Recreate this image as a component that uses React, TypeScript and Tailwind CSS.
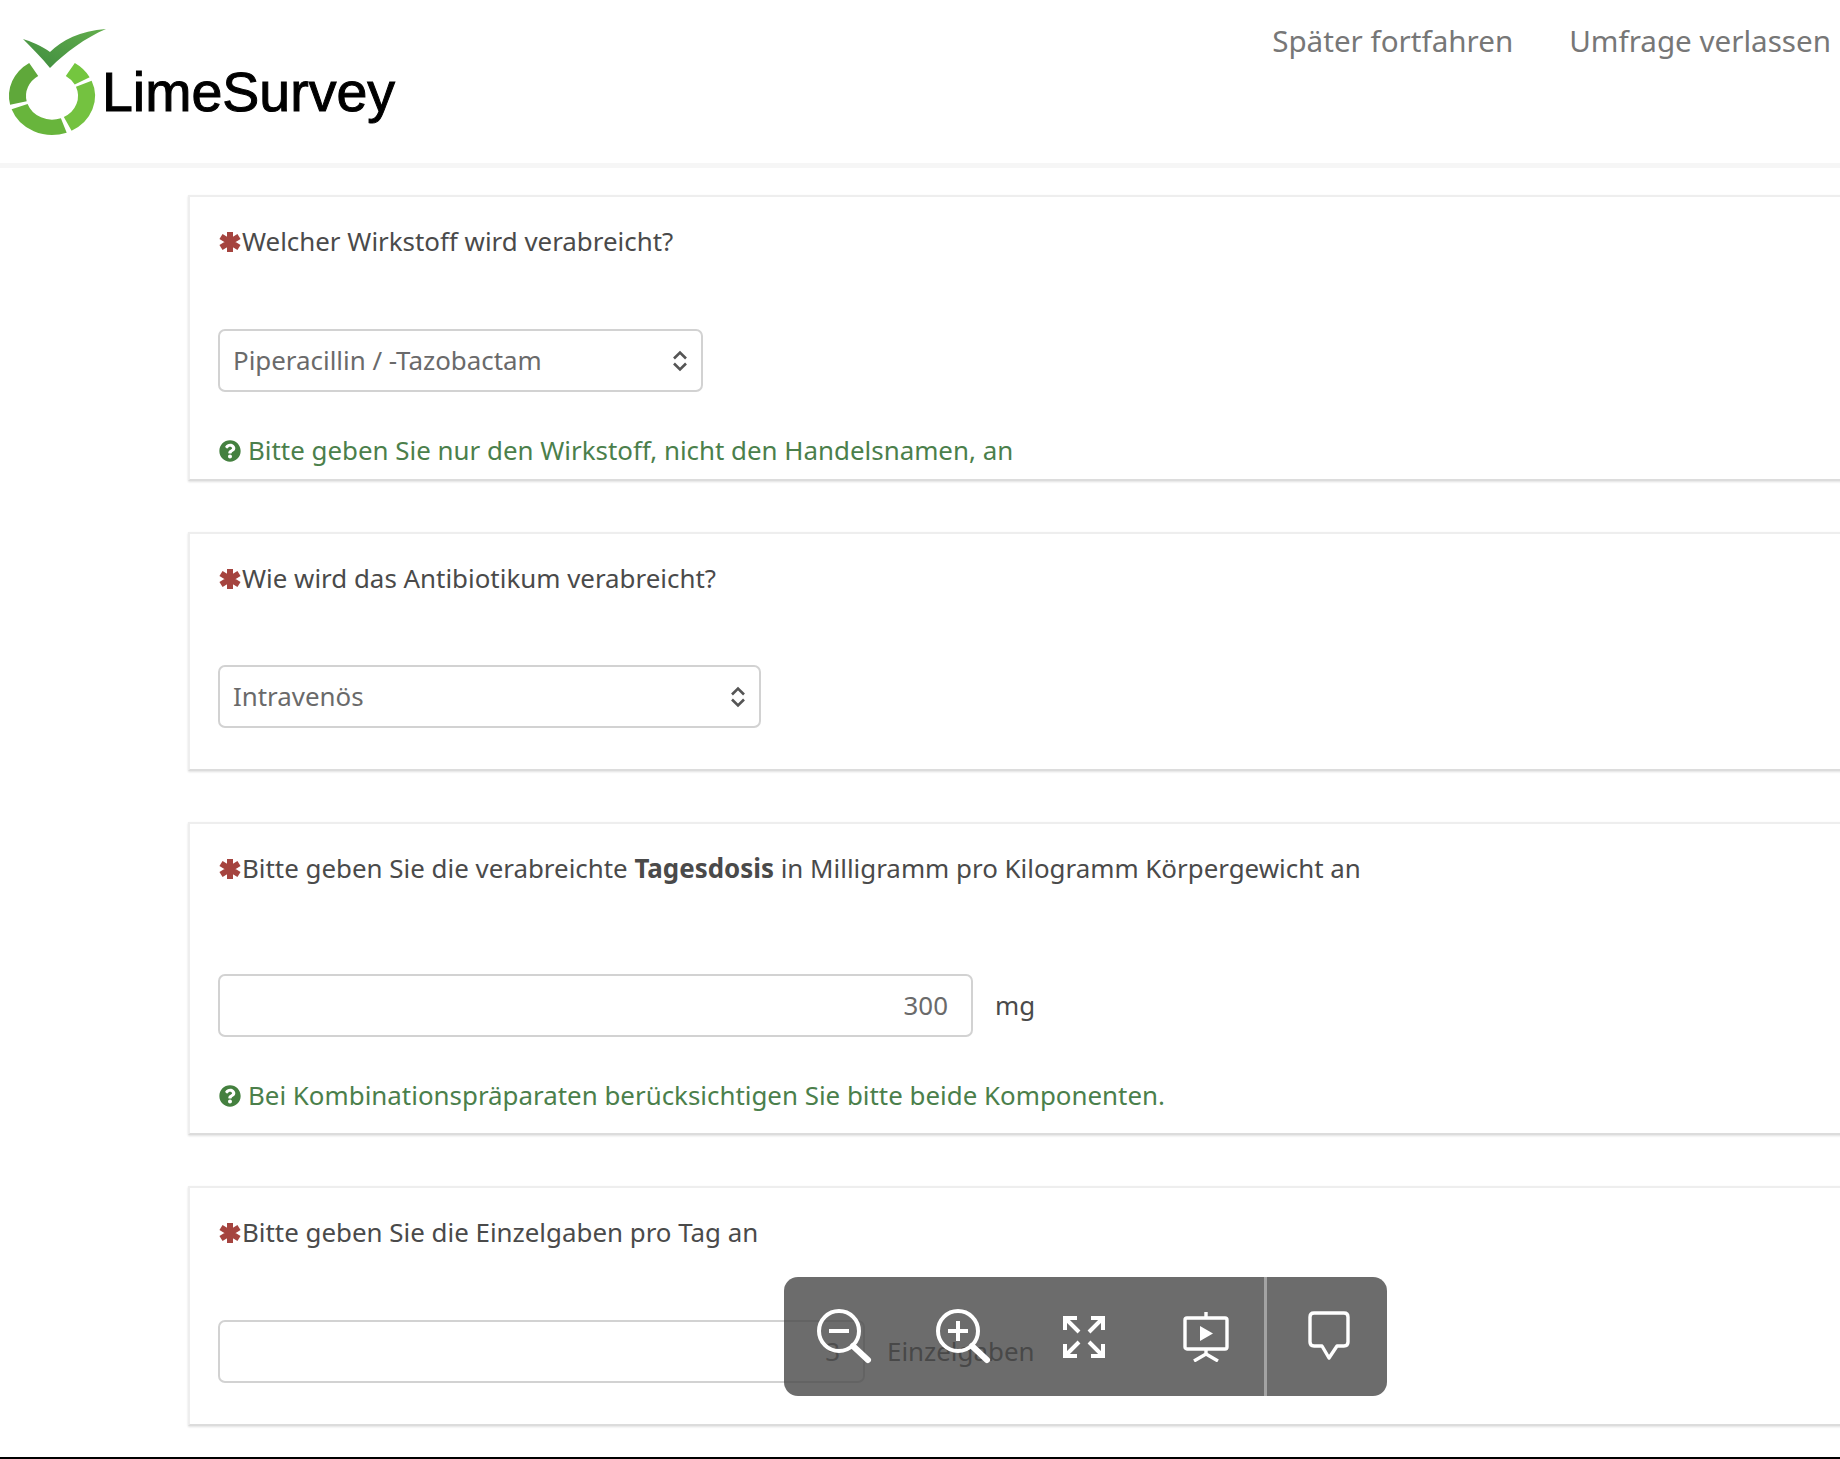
import { ReactNode } from "react";
import { FaQuestionCircle } from "react-icons/fa";

function Logo() {
  return (
    <svg width="102" height="120" viewBox="0 20 102 120" className="shrink-0 overflow-visible">
      <defs>
        <linearGradient id="tick" x1="0" y1="1" x2="1" y2="0">
          <stop offset="0" stopColor="#3f8c3f" />
          <stop offset="1" stopColor="#62ad4c" />
        </linearGradient>
      </defs>
      <g fill="none" strokeWidth="17" transform="translate(0 100) scale(1 .907) translate(0 -96)">
        <path d="M33.7 66.7A34.5 34.5 0 0 0 18.4 103.8" stroke="#5fa83a" />
        <path d="M19.6 107.8A34.5 34.5 0 0 0 63.8 128.4" stroke="#68b53c" />
        <path d="M67.7 126.7A34.5 34.5 0 0 0 83.8 82.5" stroke="#74c240" />
        <path d="M82.2 79.3A34.5 34.5 0 0 0 70.3 66.7" stroke="#74c63f" />
      </g>
      <path d="M23 39C30 41 42 46 50 52C62 40 80 31 106 29C85 38 66 52 50 68C42 58 32 48 23 39Z" fill="url(#tick)" transform="translate(0 4)" />
    </svg>
  );
}

function Star() {
  return (
    <svg width="24" height="24" viewBox="0 0 24 24" stroke="#a5443f" strokeWidth="6" className="shrink-0">
      <path d="M12 2V22M3 6.5L21 17.5M21 6.5L3 17.5" />
    </svg>
  );
}

function Question({ children }: { children: ReactNode }) {
  return (
    <div className="flex items-center h-[37px]">
      <Star />
      <span className="whitespace-pre">{children}</span>
    </div>
  );
}

function Hint({ text }: { text: string }) {
  return (
    <div className="flex items-center h-[37px] text-[#4b7f4b]">
      <FaQuestionCircle className="w-[22px] h-[22px] ml-[1px] mr-[7px] shrink-0 text-[#44803f]" />
      <span className="whitespace-nowrap">{text}</span>
    </div>
  );
}

function SelectBox({ value, width }: { value: string; width: string }) {
  return (
    <div className={`flex items-center justify-between h-[63px] pl-[13px] pr-[12px] border-2 border-[#d2d2d2] rounded-[7px] text-[#6a6a6a] ${width}`}>
      <span>{value}</span>
      <svg width="18" height="22" viewBox="0 0 18 22" fill="none" stroke="#555" strokeWidth="2.6">
        <path d="M3 8.5L9 2.5L15 8.5" />
        <path d="M3 13.5L9 19.5L15 13.5" />
      </svg>
    </div>
  );
}

function NumberBox({ value, width }: { value: string; width: string }) {
  return (
    <div className={`flex items-center justify-end h-[63px] pr-[23px] border-2 border-[#d2d2d2] rounded-[7px] text-[#6a6a6a] ${width}`}>
      {value}
    </div>
  );
}

function Toolbar() {
  return (
    <div className="absolute left-[784px] top-[1277px] w-[603px] h-[119px] flex rounded-[14px] bg-[#474747]/80">
      <div className="w-[480px] grid grid-cols-4 items-center justify-items-center">
        <svg width="60" height="60" viewBox="0 0 60 60" fill="none" stroke="#fff" strokeWidth="4" strokeLinecap="round">
          <circle cx="25" cy="24" r="20" />
          <path d="M15 24H35" strokeLinecap="butt" />
          <path d="M39 39L54 53" strokeWidth="6" />
        </svg>
        <svg width="60" height="60" viewBox="0 0 60 60" fill="none" stroke="#fff" strokeWidth="4" strokeLinecap="round" className="-translate-x-[1px]">
          <circle cx="25" cy="24" r="20" />
          <path d="M15 24H35M25 14V34" strokeLinecap="butt" />
          <path d="M39 39L54 53" strokeWidth="6" />
        </svg>
        <svg width="46" height="46" viewBox="0 0 46 46" fill="none" stroke="#fff" strokeWidth="4">
          <path d="M16 4H4V16M4 4L18 18" />
          <path d="M30 4H42V16M42 4L28 18" />
          <path d="M16 42H4V30M4 42L18 28" />
          <path d="M30 42H42V30M42 42L28 28" />
        </svg>
        <svg width="48" height="50" viewBox="0 0 48 50" fill="none" stroke="#fff" strokeWidth="3.4" className="translate-x-[2px]">
          <rect x="3" y="6" width="42" height="31" rx="2" />
          <path d="M24 0V6M24 37V43M12 49L24 42L36 49" />
          <path d="M18 14L31 21.5L18 29Z" fill="#fff" stroke="none" />
        </svg>
      </div>
      <div className="w-[3px] bg-[#a3a3a3]" />
      <div className="flex-1 flex items-center justify-center">
        <svg width="42" height="50" viewBox="0 0 42 50" fill="none" stroke="#fff" strokeWidth="3.4" strokeLinejoin="round" className="translate-x-[2px] -translate-y-[1px]">
          <path d="M6 2H36Q40 2 40 6V31Q40 35 36 35H29L21 47L14 35H6Q2 35 2 31V6Q2 2 6 2Z" />
        </svg>
      </div>
    </div>
  );
}

export default function App() {
  const card = "w-[1700px] pl-[28px] pt-[26px] border-2 border-[#eeeeee] border-b-[#dcdcdc] shadow-[0_1px_2px_rgba(0,0,0,0.12)] bg-white";

  return (
    <div className="relative w-[1840px] h-[1459px] overflow-hidden flex flex-col bg-white text-[25.9px] text-[#4a4a4a] font-['Noto_Sans',sans-serif]">
      <header className="h-[168px] shrink-0 flex justify-between border-b-[5px] border-[#f6f6f6] pr-[9px]">
        <div className="flex items-start mt-[16px]">
          <Logo />
          <span className="mt-[44px] text-[55.5px] leading-[64px] text-black font-['Liberation_Sans',sans-serif] [-webkit-text-stroke:1px_black]">LimeSurvey</span>
        </div>
        <nav className="flex gap-[56px] pt-[22px] text-[#777] text-[29.6px] leading-[38px]">
          <span>Später fortfahren</span>
          <span>Umfrage verlassen</span>
        </nav>
      </header>

      <main className="flex flex-col gap-[51px] pl-[188px] pt-[27px]">
        <section className={`${card} h-[286px]`}>
          <Question>Welcher Wirkstoff wird verabreicht?</Question>
          <div className="mt-[69px]">
            <SelectBox value="Piperacillin / -Tazobactam" width="w-[485px]" />
          </div>
          <div className="mt-[40px]">
            <Hint text="Bitte geben Sie nur den Wirkstoff, nicht den Handelsnamen, an" />
          </div>
        </section>

        <section className={`${card} h-[239px]`}>
          <Question>Wie wird das Antibiotikum verabreicht?</Question>
          <div className="mt-[68px]">
            <SelectBox value="Intravenös" width="w-[543px]" />
          </div>
        </section>

        <section className={`${card} h-[313px]`}>
          <Question>
            Bitte geben Sie die verabreichte <b className="font-bold">Tagesdosis</b> in Milligramm pro Kilogramm Körpergewicht an
          </Question>
          <div className="mt-[87px] flex items-center gap-[22px]">
            <NumberBox value="300" width="w-[755px]" />
            <span>mg</span>
          </div>
          <div className="mt-[40px]">
            <Hint text="Bei Kombinationspräparaten berücksichtigen Sie bitte beide Komponenten." />
          </div>
        </section>

        <section className={`${card} h-[240px]`}>
          <Question>Bitte geben Sie die Einzelgaben pro Tag an</Question>
          <div className="mt-[69px] flex items-center gap-[22px]">
            <NumberBox value="3" width="w-[647px]" />
            <span>Einzelgaben</span>
          </div>
        </section>
      </main>

      <div className="mt-auto h-[2px] bg-black" />
      <Toolbar />
    </div>
  );
}
